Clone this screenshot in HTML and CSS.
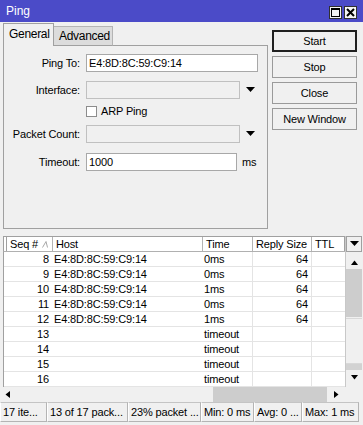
FILE: index.html
```html
<!DOCTYPE html>
<html>
<head>
<meta charset="utf-8">
<link rel="stylesheet" href="styles.css">
</head>
<body>
<div class="titlebar">
  <span class="title">Ping</span>
  <div class="tb-btns">
    <div class="tb-btn"><svg width="11" height="11" viewBox="0 0 11 11"><rect x="1.5" y="1.5" width="8" height="8" fill="none" stroke="#000" stroke-width="1"/><line x1="1.5" y1="2.5" x2="9.5" y2="2.5" stroke="#000" stroke-width="1"/></svg></div>
    <div class="tb-btn"><svg width="11" height="11" viewBox="0 0 11 11"><path d="M2 2 L9 9 M9 2 L2 9" stroke="#000" stroke-width="2"/></svg></div>
  </div>
</div>
<div class="top">
  <div class="left">
    <div class="tabs">
      <div class="tab active">General</div>
      <div class="tab">Advanced</div>
      <div class="tab-fill"></div>
    </div>
    <div class="panel">
      <div class="row r1"><label class="lbl">Ping To:</label><div class="input w172">E4:8D:8C:59:C9:14</div></div>
      <div class="row r2"><label class="lbl">Interface:</label><div class="input dis w154"></div><svg class="dd" width="9" height="6" viewBox="0 0 9 6"><path d="M0 0 H9 L4.5 5 Z" fill="#000"/></svg></div>
      <div class="row r3"><span class="lbl"></span><span class="check"></span><span class="chk-text">ARP Ping</span></div>
      <div class="row r4"><label class="lbl">Packet Count:</label><div class="input dis w154"></div><svg class="dd" width="9" height="6" viewBox="0 0 9 6"><path d="M0 0 H9 L4.5 5 Z" fill="#000"/></svg></div>
      <div class="row r5"><label class="lbl">Timeout:</label><div class="input w151">1000</div><span class="unit">ms</span></div>
    </div>
  </div>
  <div class="buttons">
    <div class="btn default">Start</div>
    <div class="btn">Stop</div>
    <div class="btn">Close</div>
    <div class="btn">New Window</div>
  </div>
</div>
<div class="table">
  <div class="cols">
    <div class="thead">
      <div class="th c0"></div>
      <div class="th c1">Seq # <svg class="sort" width="6" height="7" viewBox="0 0 6 7"><path d="M0.5 6.5 L4 0.5 L5.5 6.5" fill="none" stroke="#a8a8a8" stroke-width="1"/></svg></div>
      <div class="th c2">Host</div>
      <div class="th c3">Time</div>
      <div class="th c4">Reply Size</div>
      <div class="th c5">TTL</div>
    </div>
    <div class="tbody">
      <div class="tr"><div class="td d1">8</div><div class="td d2">E4:8D:8C:59:C9:14</div><div class="td d3">0ms</div><div class="td d4">64</div><div class="td d5"></div></div>
      <div class="tr"><div class="td d1">9</div><div class="td d2">E4:8D:8C:59:C9:14</div><div class="td d3">0ms</div><div class="td d4">64</div><div class="td d5"></div></div>
      <div class="tr"><div class="td d1">10</div><div class="td d2">E4:8D:8C:59:C9:14</div><div class="td d3">1ms</div><div class="td d4">64</div><div class="td d5"></div></div>
      <div class="tr"><div class="td d1">11</div><div class="td d2">E4:8D:8C:59:C9:14</div><div class="td d3">0ms</div><div class="td d4">64</div><div class="td d5"></div></div>
      <div class="tr"><div class="td d1">12</div><div class="td d2">E4:8D:8C:59:C9:14</div><div class="td d3">1ms</div><div class="td d4">64</div><div class="td d5"></div></div>
      <div class="tr"><div class="td d1">13</div><div class="td d2"></div><div class="td d3">timeout</div><div class="td d4"></div><div class="td d5"></div></div>
      <div class="tr"><div class="td d1">14</div><div class="td d2"></div><div class="td d3">timeout</div><div class="td d4"></div><div class="td d5"></div></div>
      <div class="tr"><div class="td d1">15</div><div class="td d2"></div><div class="td d3">timeout</div><div class="td d4"></div><div class="td d5"></div></div>
      <div class="tr"><div class="td d1">16</div><div class="td d2"></div><div class="td d3">timeout</div><div class="td d4"></div><div class="td d5"></div></div>
    </div>
  </div>
  <div class="vscroll">
    <div class="vs-dd"><svg width="9" height="6" viewBox="0 0 9 6"><path d="M0 0 H9 L4.5 5 Z" fill="#000"/></svg></div>
    <div class="vs-gap"></div>
    <div class="vs-arrow"><svg width="7" height="5" viewBox="0 0 7 5"><path d="M0 5 H7 L3.5 0.5 Z" fill="#000"/></svg></div>
    <div class="vs-thumb"></div>
    <div class="vs-track"></div>
    <div class="vs-band"></div>
    <div class="vs-arrow"><svg width="7" height="5" viewBox="0 0 7 5"><path d="M0 0 H7 L3.5 4.5 Z" fill="#000"/></svg></div>
  </div>
</div>
<div class="hscroll">
  <div class="hs-arrow"><svg width="5" height="7" viewBox="0 0 5 7"><path d="M5 0 V7 L0.5 3.5 Z" fill="#000"/></svg></div>
  <div class="hs-track"></div>
  <div class="hs-thumb"></div>
  <div class="hs-arrow r"><svg width="5" height="7" viewBox="0 0 5 7"><path d="M0 0 V7 L4.5 3.5 Z" fill="#000"/></svg></div>
  <div class="hs-corner"></div>
</div>
<div class="status">
  <div class="seg s1">17 ite...</div>
  <div class="seg s2">13 of 17 pack...</div>
  <div class="seg s3">23% packet ...</div>
  <div class="seg s4">Min: 0 ms</div>
  <div class="seg s5">Avg: 0 ...</div>
  <div class="seg s6">Max: 1 ms</div>
</div>
</body>
</html>
```

FILE: styles.css
```css
* { box-sizing: border-box; }
html, body { margin: 0; padding: 0; }
body {
  width: 363px;
  height: 425px;
  overflow: hidden;
  background: #f0f0f0;
  font-family: "Liberation Sans", Arial, sans-serif;
  font-size: 11px;
  letter-spacing: -0.15px;
  color: #000;
}
.titlebar {
  height: 22px;
  background: #4b4bc8;
  display: flex;
  align-items: center;
  justify-content: space-between;
  padding: 0 6px 0 6px;
}
.title { color: #fff; font-size: 12px; letter-spacing: 0; }
.tb-btns { display: flex; gap: 2px; margin-top: 3px; }
.tb-btn {
  width: 13px; height: 13px;
  background: #f4f4f4;
  border: 1px solid #303030;
  display: flex; align-items: center; justify-content: center;
}
.top { display: flex; padding: 1px 0 0 3px; }
.left { width: 265px; }
.tabs { display: flex; height: 23px; align-items: flex-end; }
.tab {
  height: 20px;
  padding: 0 0 0 5px;
  width: 59px;
  background: #dcdcdc;
  border-top: 1px solid #b4b4b4;
  border-right: 1px solid #b4b4b4;
  border-bottom: 1px solid #a0a0a0;
  line-height: 19px;
  font-size: 12px;
  letter-spacing: -0.3px;
}
.tab.active {
  height: 23px;
  width: 51px;
  background: #f0f0f0;
  border-left: 1px solid #a0a0a0;
  border-top: 1px solid #a0a0a0;
  border-right: 1px solid #a0a0a0;
  border-bottom: none;
  line-height: 20px;
  padding-left: 5px;
}
.tab-fill { flex: 1; border-bottom: 1px solid #a0a0a0; height: 1px; }
.panel {
  height: 183px;
  border-left: 1px solid #a0a0a0;
  border-right: 1px solid #a0a0a0;
  border-bottom: 1px solid #a0a0a0;
  padding-top: 8px;
}
.row { display: flex; align-items: center; height: 18px; }
.r2 { margin-top: 9px; }
.r3 { margin-top: 6px; height: 12px; }
.r4 { margin-top: 8px; }
.r5 { margin-top: 10px; }
.lbl { width: 76px; text-align: right; margin-right: 6px; }
.input {
  height: 18px;
  border: 1px solid #a8a8a8;
  background: #fff;
  padding-left: 2px;
  line-height: 16px;
}
.input.dis { background: #f0f0f0; border-color: #c0c0c0; }
.w172 { width: 172px; }
.w154 { width: 154px; }
.w151 { width: 151px; }
.dd { margin-left: 6px; }
.check {
  width: 11px; height: 11px;
  border: 1px solid #8c8c8c;
  background: #fff;
  margin-right: 4px;
}
.unit { margin-left: 5px; }
.buttons {
  margin-left: 4px;
  padding-top: 7px;
  display: flex;
  flex-direction: column;
  gap: 4px;
}
.btn {
  width: 85px;
  height: 22px;
  border: 1px solid #9a9a9a;
  background: #f0f0f0;
  text-align: center;
  line-height: 20px;
}
.btn.default { border: 2px solid #202020; line-height: 18px; }
.table {
  display: flex;
  margin: 7px 0 0 3px;
  width: 359px;
}
.cols { width: 342px; }
.thead {
  display: flex;
  height: 16px;
  background: #fff;
  border-top: 1px solid #a0a0a0;
  border-left: 1px solid #a0a0a0;
  border-bottom: 1px solid #b0b0b0;
}
.th {
  border-right: 1px solid #b4b4b4;
  padding-left: 3px;
  line-height: 14px;
  white-space: nowrap;
  overflow: hidden;
}
.c0 { width: 3px; padding: 0; border-right-color: #a0a0a0; }
.c1 { width: 46px; }
.c2 { width: 150px; }
.c3 { width: 50px; }
.c4 { width: 59px; }
.c5 { width: 33px; border-right: 1px solid #a0a0a0; }
.sort { margin-left: 1px; vertical-align: 0; }
.tbody { height: 135px; overflow: hidden; border-left: 1px solid #a0a0a0; background: #fff; }
.tr { display: flex; height: 15px; border-bottom: 1px solid #e4e4e4; }
.td { line-height: 14px; white-space: nowrap; }
.d1 { width: 48px; text-align: right; padding-right: 3px; }
.d2 { width: 151px; padding-left: 2px; }
.d3 { width: 50px; padding-left: 1px; border-right: 1px solid #e4e4e4; }
.d4 { width: 59px; text-align: right; padding-right: 3px; border-right: 1px solid #e4e4e4; }
.d5 { width: 33px; }
.vscroll { width: 17px; display: flex; flex-direction: column; border-left: 1px solid #c8c8c8; }
.vs-dd {
  height: 16px;
  border: 1px solid #a0a0a0;
  background: #f0f0f0;
  display: flex; align-items: center; justify-content: center;
}
.vs-gap { height: 4px; }
.vs-arrow { height: 12px; display: flex; align-items: center; justify-content: center; }
.vs-thumb { height: 48px; background: #cdcdcd; margin: 1px 0; }
.vs-track { height: 46px; background: #f0f0f0; border-top: 1px solid #d8d8d8; border-bottom: 1px solid #d8d8d8; }
.vs-band { height: 6px; background: #d2d2d2; margin-bottom: 1px; }
.hscroll {
  display: flex;
  align-items: center;
  height: 15px;
  width: 363px;
}
.hs-arrow { width: 15px; height: 15px; display: flex; align-items: center; justify-content: center; }
.hs-arrow.r { width: 18px; }
.hs-track { width: 198px; height: 15px; background: #f0f0f0; }
.hs-thumb { width: 114px; height: 15px; background: #cdcdcd; }
.hs-corner { width: 18px; height: 15px; background: #f0f0f0; }
.status { display: flex; height: 20px; }
.seg {
  height: 20px;
  border: 1px solid #b4b4b4;
  border-left-color: #ffffff;
  border-top-color: #c4c4c4;
  padding-left: 2px;
  line-height: 18px;
  white-space: nowrap;
  overflow: hidden;
}
.s1 { width: 47px; }
.s2 { width: 81px; }
.s3 { width: 73px; }
.s4 { width: 53px; }
.s5 { width: 48px; }
.s6 { width: 57px; }
```
